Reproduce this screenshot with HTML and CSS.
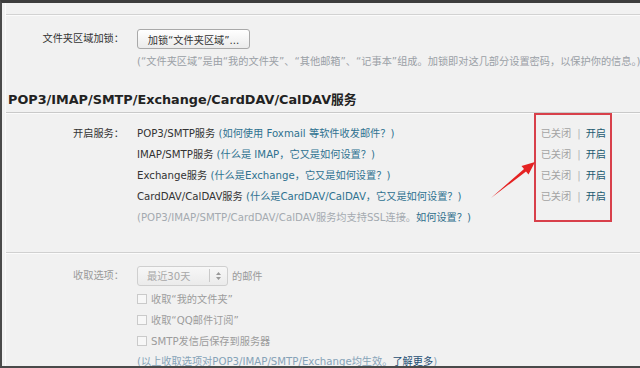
FILE: index.html
```html
<!DOCTYPE html>
<html lang="zh-CN">
<head>
<meta charset="utf-8">
<title>设置</title>
<link rel="stylesheet" href="styles.css">
</head>
<body>
<div class="frame">
  <div class="inner">
    <div class="topstrip"></div>

    <section class="lock">
      <div class="row">
        <div class="label">文件夹区域加锁：</div>
        <div class="field"><button class="btn">加锁“文件夹区域”...</button></div>
      </div>
      <div class="row">
        <div></div>
        <div class="muted">(“文件夹区域”是由“我的文件夹”、“其他邮箱”、“记事本”组成。加锁即对这几部分设置密码，以保护你的信息。)</div>
      </div>
    </section>

    <h2 class="heading">POP3/IMAP/SMTP/Exchange/CardDAV/CalDAV服务</h2>

    <section class="services">
      <div class="label svc-label">开启服务：</div>
      <div class="svc-list">
        <div class="svc"><span>POP3/SMTP服务 <a class="link">(如何使用 Foxmail 等软件收发邮件？)</a></span><span class="status"><span class="off">已关闭</span><span class="sep">|</span><a class="on">开启</a></span></div>
        <div class="svc"><span>IMAP/SMTP服务 <a class="link">(什么是 IMAP，它又是如何设置？)</a></span><span class="status"><span class="off">已关闭</span><span class="sep">|</span><a class="on">开启</a></span></div>
        <div class="svc"><span>Exchange服务 <a class="link">(什么是Exchange，它又是如何设置？)</a></span><span class="status"><span class="off">已关闭</span><span class="sep">|</span><a class="on">开启</a></span></div>
        <div class="svc"><span>CardDAV/CalDAV服务 <a class="link">(什么是CardDAV/CalDAV，它又是如何设置？)</a></span><span class="status"><span class="off">已关闭</span><span class="sep">|</span><a class="on">开启</a></span></div>
        <div class="svc svc-note">(POP3/IMAP/SMTP/CardDAV/CalDAV服务均支持SSL连接。<a class="link-dark">如何设置？)</a></div>
      </div>
    </section>

    <section class="fetch">
      <div class="label fetch-label">收取选项：</div>
      <div class="fetch-list">
        <div class="fetch-row">
          <span class="select"><span class="select-text">最近30天</span><span class="select-sep"></span><svg class="select-arrows" width="5" height="8" viewBox="0 0 5 8"><path d="M2.5 0 L5 3 L0 3 Z M0 5 L5 5 L2.5 8 Z" fill="#999"/></svg></span>
          <span class="after">的邮件</span>
        </div>
        <label class="check"><span class="box"></span>收取“我的文件夹”</label>
        <label class="check"><span class="box"></span>收取“QQ邮件订阅”</label>
        <label class="check"><span class="box"></span>SMTP发信后保存到服务器</label>
        <div class="fetch-note">(以上收取选项对POP3/IMAP/SMTP/Exchange均生效。<a class="more">了解更多</a>)</div>
      </div>
    </section>
  </div>
</div>

<div class="highlight"></div>
<svg class="arrow" width="640" height="368" viewBox="0 0 640 368">
  <polygon points="491,198 524,169 521.5,166 535,162 528.5,174.5 526,171.5" fill="#e52222"/>
</svg>
</body>
</html>
```

FILE: styles.css
```css
* { box-sizing: border-box; }

html, body {
  margin: 0;
  padding: 0;
  width: 640px;
  height: 368px;
  overflow: hidden;
}

body {
  position: relative;
  font-family: "DejaVu Sans", "Noto Sans CJK SC", sans-serif;
  font-size: 10.2px;
  color: #333;
  background: #f1f1f1;
}

.frame {
  width: 640px;
  height: 368px;
  border-top: 3px solid #3d3d3d;
  border-left: 2px solid #4a4a4a;
  border-bottom: 2px solid #4a4a4a;
  background: #f1f1f1;
  overflow: hidden;
}

.inner {
  margin-left: 3px;
  height: 100%;
  border-left: 1px solid #fafafa;
}

.topstrip {
  height: 12px;
  border-bottom: 1px solid #d2d2d2;
  box-shadow: 0 1px 0 #fbfbfb;
}

.row {
  display: grid;
  grid-template-columns: 118px 1fr;
  column-gap: 13px;
}

.label {
  text-align: right;
  line-height: 20px;
  white-space: nowrap;
}

.lock {
  padding-top: 14px;
}

.btn {
  width: 113px;
  height: 20px;
  padding: 0;
  font: inherit;
  color: #333;
  border: 1px solid #a9a9a9;
  border-radius: 3px;
  background: linear-gradient(#ffffff, #ebebeb);
}

.muted {
  margin-top: 3px;
  line-height: 20px;
  color: #9aa0a6;
  white-space: nowrap;
}

.heading {
  margin: 18px 0 0;
  padding: 0 0 2px 2px;
  font-size: 12.8px;
  font-weight: bold;
  line-height: 20px;
  color: #222;
  border-bottom: 1px solid #c9c9c9;
  box-shadow: 0 1px 0 #fbfbfb;
  white-space: nowrap;
}

.services {
  display: grid;
  grid-template-columns: 118px 1fr;
  column-gap: 13px;
  padding: 10px 34px 24px 0;
  border-bottom: 1px solid #d0d0d0;
  box-shadow: 0 1px 0 #fbfbfb;
}

.svc-label {
  line-height: 21px;
}

.svc {
  display: flex;
  justify-content: space-between;
  line-height: 21px;
  white-space: nowrap;
}

.link {
  color: #2f7190;
}

.status {
  display: flex;
  align-items: center;
}

.off {
  color: #a3a3a3;
}

.sep {
  margin: 0 5px 0 6px;
  color: #b5b5b5;
}

.on {
  color: #1c5a70;
}

.svc-note {
  color: #a4aab0;
  justify-content: flex-start;
}

.link-dark {
  color: #2f6f8c;
}

.fetch {
  display: grid;
  grid-template-columns: 118px 1fr;
  column-gap: 13px;
  padding-top: 12px;
}

.fetch-label {
  color: #9a9a9a;
  line-height: 21px;
}

.fetch-list {
  display: flex;
  flex-direction: column;
}

.fetch-row {
  display: flex;
  align-items: center;
  gap: 4px;
  height: 21px;
  margin-bottom: 2px;
}

.select {
  display: flex;
  align-items: center;
  width: 91px;
  height: 20px;
  border: 1px solid #cfcfcf;
  border-radius: 3px;
  background: linear-gradient(#f7f7f7, #ebebeb);
}

.select-text {
  flex: 1;
  padding-left: 9px;
  color: #a8a8a8;
}

.select-sep {
  width: 1px;
  height: 13px;
  background: #c9c9c9;
  margin-right: 6px;
}

.select-arrows {
  margin-right: 6px;
}

.after {
  color: #9a9a9a;
}

.check {
  display: flex;
  align-items: center;
  height: 21px;
  color: #9c9c9c;
  white-space: nowrap;
}

.box {
  width: 10px;
  height: 10px;
  margin-right: 4px;
  border: 1px solid #cacaca;
  background: #f7f7f7;
}

.fetch-note {
  line-height: 21px;
  color: #86a3b8;
  white-space: nowrap;
}

.more {
  color: #1f4f74;
}

.highlight {
  position: absolute;
  left: 534px;
  top: 113px;
  width: 78px;
  height: 109px;
  border: 2px solid #d8404a;
}

.arrow {
  position: absolute;
  left: 0;
  top: 0;
  pointer-events: none;
}
```
